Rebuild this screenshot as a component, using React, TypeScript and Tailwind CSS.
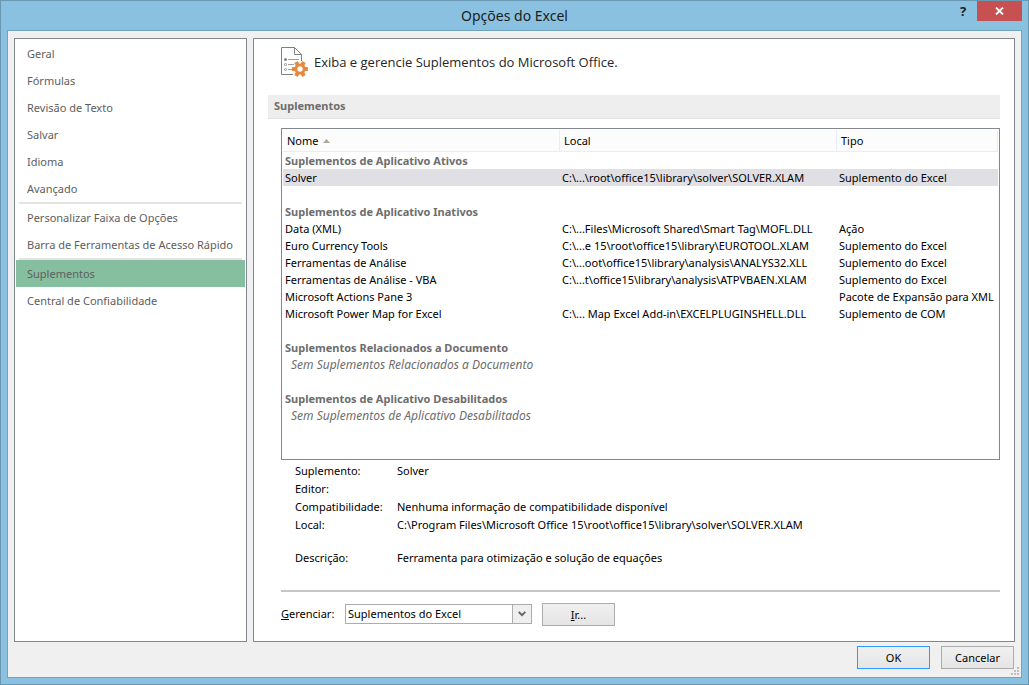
import { Fragment, useState } from "react";
import clsx from "clsx";

const navGroups = [
  ["Geral", "Fórmulas", "Revisão de Texto", "Salvar", "Idioma", "Avançado"],
  ["Personalizar Faixa de Opções", "Barra de Ferramentas de Acesso Rápido"],
  ["Suplementos", "Central de Confiabilidade"],
];

type AddIn = { name: string; path: string; type: string };

const sections: { title: string; items: AddIn[]; empty?: string }[] = [
  {
    title: "Suplementos de Aplicativo Ativos",
    items: [
      { name: "Solver", path: "C:\\...\\root\\office15\\library\\solver\\SOLVER.XLAM", type: "Suplemento do Excel" },
    ],
  },
  {
    title: "Suplementos de Aplicativo Inativos",
    items: [
      { name: "Data (XML)", path: "C:\\...Files\\Microsoft Shared\\Smart Tag\\MOFL.DLL", type: "Ação" },
      { name: "Euro Currency Tools", path: "C:\\...e 15\\root\\office15\\library\\EUROTOOL.XLAM", type: "Suplemento do Excel" },
      { name: "Ferramentas de Análise", path: "C:\\...oot\\office15\\library\\analysis\\ANALYS32.XLL", type: "Suplemento do Excel" },
      { name: "Ferramentas de Análise - VBA", path: "C:\\...t\\office15\\library\\analysis\\ATPVBAEN.XLAM", type: "Suplemento do Excel" },
      { name: "Microsoft Actions Pane 3", path: "", type: "Pacote de Expansão para XML" },
      { name: "Microsoft Power Map for Excel", path: "C:\\... Map Excel Add-in\\EXCELPLUGINSHELL.DLL", type: "Suplemento de COM" },
    ],
  },
  { title: "Suplementos Relacionados a Documento", items: [], empty: "Sem Suplementos Relacionados a Documento" },
  { title: "Suplementos de Aplicativo Desabilitados", items: [], empty: "Sem Suplementos de Aplicativo Desabilitados" },
];

const details = [
  { label: "Suplemento:", value: "Solver" },
  { label: "Editor:", value: "" },
  { label: "Compatibilidade:", value: "Nenhuma informação de compatibilidade disponível" },
  { label: "Local:", value: "C:\\Program Files\\Microsoft Office 15\\root\\office15\\library\\solver\\SOLVER.XLAM" },
];

const buttonClass =
  "h-[23px] w-[73px] border bg-linear-to-b from-[#f0f0f0] to-[#e5e5e5] leading-4 text-black";

function AddInsIcon() {
  return (
    <svg width="28" height="30" viewBox="0 0 28 30" fill="none" aria-hidden="true">
      <path d="M12 27.5H0.5V0.5H13.5L20.5 7.5V14" stroke="#808080" />
      <path d="M13.5 0.5V7.5H20.5" stroke="#808080" />
      <circle cx="4.5" cy="12.5" r="1.5" fill="#808080" />
      <circle cx="4.5" cy="17.5" r="1" stroke="#909090" />
      <circle cx="4.5" cy="22.5" r="1" stroke="#909090" />
      <path d="M7 12.5H18M7 17.5H13M7 22.5H11" stroke="#a0a0a0" />
      <g transform="translate(19 22)" fill="#e8883c">
        <rect x="-2" y="-8" width="4" height="16" rx="0.5" transform="rotate(30)" />
        <rect x="-2" y="-8" width="4" height="16" rx="0.5" transform="rotate(90)" />
        <rect x="-2" y="-8" width="4" height="16" rx="0.5" transform="rotate(150)" />
        <circle r="5.6" />
        <circle r="2.7" fill="#fff" />
      </g>
    </svg>
  );
}

function TitleBar() {
  return (
    <header className="grid h-[29px] grid-cols-[1fr_auto_1fr] items-start">
      <span />
      <h1 className="text-sm leading-[29px] text-[#1c1c1c]">Opções do Excel</h1>
      <div className="flex justify-end">
        <button type="button" aria-label="Ajuda" className="h-5 w-7 text-[13px] leading-5 font-bold text-[#1c1c1c]">
          ?
        </button>
        <button type="button" aria-label="Fechar" className="flex h-5 w-[45px] items-center justify-center bg-[#c75050]">
          <svg width="9" height="8" viewBox="0 0 9 8" aria-hidden="true">
            <path d="M1 0.5L8 7.5M8 0.5L1 7.5" stroke="#fff" strokeWidth="1.8" />
          </svg>
        </button>
      </div>
    </header>
  );
}

function Sidebar() {
  const [active, setActive] = useState("Suplementos");
  return (
    <nav className="w-[233px] shrink-0 border border-[#828790] bg-white p-px">
      {navGroups.map((group, i) => (
        <Fragment key={i}>
          {i > 0 && <hr className="mx-[3px] h-0.5 border-0 bg-[#e3e3e3]" />}
          {group.map((item) => (
            <button
              key={item}
              type="button"
              onClick={() => setActive(item)}
              className={clsx(
                "block h-[27px] w-full pt-px pl-[11px] text-left whitespace-nowrap text-[#5e5e5e]",
                item === active && "bg-[#86bf9f]"
              )}
            >
              {item}
            </button>
          ))}
        </Fragment>
      ))}
    </nav>
  );
}

function AddInsTable() {
  return (
    <div className="mt-[9px] ml-[13px] min-h-[332px] flex-1 border border-[#828790] bg-white p-px">
      <table className="w-full table-fixed border-separate border-spacing-0 text-left leading-[17px] whitespace-nowrap">
        <thead>
          <tr className="h-[22px] bg-[#fcfcfc]">
            <th className="w-[277px] border-r border-b border-[#e5effb] pl-1 font-normal">
              <span className="flex items-center gap-1">
                Nome
                <svg width="7" height="4" viewBox="0 0 7 4" aria-hidden="true">
                  <path d="M0 4L3.5 0L7 4Z" fill="#a9a99c" />
                </svg>
              </span>
            </th>
            <th className="w-[277px] border-r border-b border-[#e5effb] pl-1 font-normal">Local</th>
            <th className="border-r border-b border-[#e5effb] pl-1 font-normal">Tipo</th>
          </tr>
        </thead>
        {sections.map((section, i) => (
          <tbody key={section.title}>
            {i > 0 && (
              <tr className="h-[17px]">
                <td colSpan={3} />
              </tr>
            )}
            <tr className="h-[17px]">
              <th colSpan={3} className="pl-0.5 font-bold text-[#6d6d6d]">
                {section.title}
              </th>
            </tr>
            {section.items.map((item) => (
              <tr key={item.name} className={clsx("h-[17px]", item.name === "Solver" && "bg-[#e0dfe4]")}>
                <td className="pl-0.5">{item.name}</td>
                <td className="pl-0.5">{item.path}</td>
                <td className="pl-0.5">{item.type}</td>
              </tr>
            ))}
            {section.empty && (
              <tr className="h-[17px]">
                <td colSpan={3} className="pl-2 text-xs leading-[17px] text-[#6d6d6d] italic">
                  {section.empty}
                </td>
              </tr>
            )}
          </tbody>
        ))}
      </table>
    </div>
  );
}

function Details() {
  return (
    <dl className="mt-0.5 ml-[27px] grid grid-cols-[102px_1fr] leading-[18px]">
      {details.map((d) => (
        <Fragment key={d.label}>
          <dt>{d.label}</dt>
          <dd>{d.value}</dd>
        </Fragment>
      ))}
      <dt className="mt-[15px]">Descrição:</dt>
      <dd className="mt-[15px]">Ferramenta para otimização e solução de equações</dd>
    </dl>
  );
}

function ManageBar() {
  return (
    <div className="mt-[11px] mb-[15px] ml-[13px] flex items-start">
      <label htmlFor="manage" className="w-16 leading-[22px]">
        <u>G</u>erenciar:
      </label>
      <div className="relative mt-px">
        <select
          id="manage"
          className="block h-5 w-[187px] appearance-none border border-[#acacac] bg-white pl-0.5 leading-4 text-black"
        >
          <option>Suplementos do Excel</option>
          <option>Suplementos de COM</option>
          <option>Ações</option>
          <option>Pacotes de Expansão para XML</option>
          <option>Itens Desabilitados</option>
        </select>
        <span className="pointer-events-none absolute inset-y-0 right-0 flex w-5 items-center justify-center border border-[#acacac] bg-[#efefef]">
          <svg width="8" height="6" viewBox="0 0 8 6" fill="none" aria-hidden="true">
            <path d="M0.7 0.8L4 4.2L7.3 0.8" stroke="#606060" strokeWidth="1.8" />
          </svg>
        </span>
      </div>
      <button type="button" className={clsx(buttonClass, "ml-[10px] border-[#acacac]")}>
        <u>I</u>r...
      </button>
    </div>
  );
}

function SizeGrip() {
  return (
    <svg
      className="absolute right-0.5 bottom-0.5"
      width="8"
      height="8"
      viewBox="0 0 8 8"
      fill="#bfbfbf"
      aria-hidden="true"
    >
      <path d="M6 0h2v2H6zM3 3h2v2H3zM6 3h2v2H6zM0 6h2v2H0zM3 6h2v2H3zM6 6h2v2H6z" />
    </svg>
  );
}

export default function App() {
  return (
    <div className="flex min-h-screen flex-col border border-[#6a97b1] bg-[#8ac1e0] px-1.5 pb-1.5 font-['Noto_Sans',sans-serif] text-[11px] text-black">
      <TitleBar />
      <div className="relative flex flex-1 flex-col border border-[#6fa3bf] bg-[#f0f0f0] px-1.5 pt-[7px] pb-2">
        <div className="flex flex-1 gap-1.5">
          <Sidebar />
          <main className="flex min-w-0 flex-1 flex-col border border-[#828790] bg-white pr-3.5 pl-3.5">
            <div className="mt-2 ml-[13px] flex items-start gap-[5px]">
              <AddInsIcon />
              <p className="font-['Open_Sans',sans-serif] text-[13px] leading-[30px] text-[#262626]">
                Exiba e gerencie Suplementos do Microsoft Office.
              </p>
            </div>
            <h2 className="mt-[18px] h-6 border-b border-[#e1e1e1] bg-[#eee] pl-1.5 leading-[22px] font-bold text-[#6d6d6d]">
              Suplementos
            </h2>
            <AddInsTable />
            <Details />
            <hr className="mt-[23px] ml-[13px] h-0.5 border-0 bg-[#c6c6c6]" />
            <ManageBar />
          </main>
        </div>
        <div className="mt-1 mr-px flex justify-end gap-[11px]">
          <button type="button" className={clsx(buttonClass, "border-[#3399ff]")}>
            OK
          </button>
          <button type="button" className={clsx(buttonClass, "border-[#acacac]")}>
            Cancelar
          </button>
        </div>
        <SizeGrip />
      </div>
    </div>
  );
}
